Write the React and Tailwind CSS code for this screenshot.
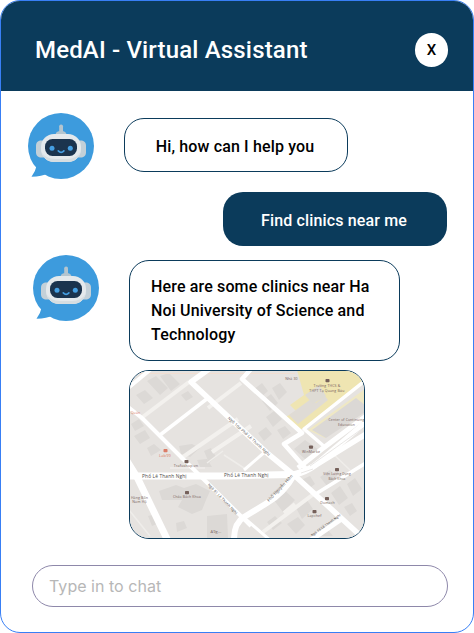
import React from "react";

function BotAvatar() {
  return (
    <svg className="h-[66px] w-[66px] shrink-0" viewBox="0 0 66 66">
      <path d="M5 46L8.500 53Q7.500 58.500 3.500 63.800Q14 63.500 20 60.500L30 60Z" fill="#3d9bdd" />
      <circle cx="33" cy="33" r="33" fill="#3d9bdd" />
      <rect x="31.2" y="11.500" width="3.800" height="11" rx="1.800" fill="#b4c5cf" />
      <path d="M27.500 22q0-4 5.500-4t5.500 4z" fill="#b4c5cf" />
      <path d="M16 27.500h-4q-4 1-4 5v7q0 4 4 5h4z" fill="#c3d0d8" />
      <path d="M50 27.500h4q4 1 4 5v7q0 4-4 5h-4z" fill="#c3d0d8" />
      <rect x="13" y="21" width="40" height="28" rx="13" fill="#e4e9ec" />
      <path d="M13.500 39q3 10 13.500 10h12q10.500 0 13.500-10q-4 7-13.500 7H27q-9.500 0-13.500-7" fill="#d5dde1" />
      <rect x="17" y="26" width="32" height="17" rx="7.500" fill="#1b344e" />
      <circle cx="24" cy="35.200" r="2.500" fill="#459fe2" />
      <circle cx="42.300" cy="35.200" r="2.500" fill="#459fe2" />
      <path d="M30.300 37.800q2.800 3 5.600 0" fill="none" stroke="#459fe2" strokeWidth="1.700" strokeLinecap="round" />
    </svg>
  );
}

function Poi({ x, y, lines, color = "#75605a", marker, size = 4 }) {
  return (
    <g fill={color}>
      {marker && <rect x={marker[0] - 2} y={marker[1] - 1.5} width="4" height="3.200" rx="0.800" />}
      {lines.map((line, i) => (
        <text key={line} x={x} y={y + i * 4.5} fontSize={size} textAnchor="middle">
          {line}
        </text>
      ))}
    </g>
  );
}

function ClinicMap() {
  return (
    <svg className="block h-full w-full font-['Open_Sans','Noto_Sans',sans-serif]" viewBox="130 371 234 167">
      <rect x="129" y="370" width="236" height="169" fill="#e6e3e0" />

      {/* School grounds */}
      <path d="M297 370H365V383L306 427L298 431L284 418L296 411L290 405L304 395Z" fill="#efe5b2" />
      <path d="M289 415L311 399L316 403L325 396L328 400L298 424Z" fill="#dfdbd5" />
      <path d="M305 395L319 385L326 396L313 404Z" fill="#dedbd4" />
      <path d="M308 430L365 389V408L325 438Z" fill="#efe8c4" />
      <path d="M312 430L356 398L365 405V412L326 438Z" fill="#dbd8d5" />

      {/* Building footprints */}
      <g fill="#dcd9d6">
        <path d="M147 381L156 376L168 388L160 395ZM160 376L169 373L180 384L171 391Z" />
        <path d="M181 395L188 391L193 397L186 401ZM136 395L145 390L153 398L144 404Z" />
        <path d="M131 424L139 419L144 426L135 431ZM134 436L145 430L150 438L140 444ZM147 448L154 444L161 450L151 456Z" />
        <path d="M253 390L262 383L268 391L260 398ZM262 401L271 394L278 403L270 411ZM272 388L280 383L287 392L279 400Z" />
        <path d="M266 417L274 411L282 419L273 427ZM258 433L266 427L272 434L264 441ZM277 430L285 426L291 433L283 439Z" />
        <path d="M179 446L192 444L200 448L190 457L181 454ZM204 451L211 448L216 457L209 463ZM197 460L207 459L212 467H200Z" />
        <path d="M159 491L176 485L184 488L196 484L210 491L206 500L202 510L192 514L178 507L182 500L162 500Z" />
        <path d="M207 516L227 514L228 538H207ZM176 523L184 521L187 528L177 532ZM148 516L157 514L161 522L152 526Z" />
        <path d="M270 495L280 486L295 500L283 512ZM301 480L310 476L315 484L307 490ZM320 477L330 470L338 478L327 486Z" />
        <path d="M331 493L340 486L348 498L339 505ZM347 484L355 478L362 489L353 496ZM344 507L352 503L357 511L350 516Z" />
        <path d="M296 508L307 500L313 509L302 519ZM287 524L298 517L305 525L296 534ZM267 522L275 516L282 523L273 530Z" />
        <path d="M294 449L305 440L319 450L306 460ZM317 530L323 524L333 536H320Z" />
      </g>

      {/* Minor lanes */}
      <g fill="none" stroke="#f3f1ee" strokeWidth="4">
        <path d="M189 382L140 419" />
        <path d="M241 383L208 408M238 419L180 459M251 426L212 452" />
        <path d="M315 493L263 532M295 504L284 513" />
        <path d="M130 373.500H295" strokeWidth="1" stroke="#f1ded2" />
      </g>
      <g fill="none" stroke="#efedea" strokeWidth="1.500">
        <path d="M170 468H205M207 463L223 451M224 455L244 468M129 510L150 536M330 451L350 470" />
      </g>

      {/* Streets */}
      <g fill="none" stroke="#ffffff" strokeLinejoin="round">
        <path d="M127 389L151 369" strokeWidth="4" />
        <path d="M209 369L191 382L266 452L294 475L364 539" strokeWidth="5.500" />
        <path d="M208 398L160 435" strokeWidth="3.500" />
        <path d="M128 407L142 418L178 454L251 526" strokeWidth="4" />
        <path d="M125 458L137 477L168 541" strokeWidth="7" />
        <path d="M128 476H225L290 474.500" strokeWidth="7" />
        <path d="M252 368L242 379L302 433L284 444L307 470" strokeWidth="4.500" />
        <path d="M366 380L304 429L326 448" strokeWidth="3.500" />
        <path d="M286 475Q307 473 320 461L366 422" strokeWidth="5.500" />
        <path d="M294 475Q305 473 316 465L366 434" strokeWidth="5.500" />
        <path d="M298 468L322 449L366 416" strokeWidth="5" />
        <path d="M244 470L266 451" strokeWidth="3" />
        <path d="M294 475Q284 493 267 503L244 517Q234 523 234 540" strokeWidth="6" />
        <path d="M242 516L271 541" strokeWidth="3" />
        <path d="M369 461L314 495" strokeWidth="3.500" />
        <path d="M343 518L308 542" strokeWidth="5" />
      </g>
      <path d="M310 466L366 426M301 473L313 469" fill="none" stroke="#dfddda" strokeWidth="0.700" />

      {/* Street names */}
      <g fill="#4c4947" fontSize="4.800">
        <text x="142" y="477.600">Phố Lê Thanh Nghị</text>
        <text x="224" y="476.800">Phố Lê Thanh Nghị</text>
        <g fontSize="4">
          <text transform="translate(227.500 418.500) rotate(42.500)">Ngõ 10p Phố Lê Thanh Nghị</text>
          <text transform="translate(207.500 485) rotate(46)" fontSize="3.700">Ngõ 81 Lê Thanh Nghị</text>
          <text transform="translate(269 502) rotate(-47)" fontSize="4.100">Phố Nguyễn Hiền</text>
          <text transform="translate(312 536.500) rotate(-36)" fontSize="3.200">Ngõ 15 Lê Thanh Nghị</text>
        </g>
      </g>

      {/* Places */}
      <Poi x={291.5} y={380} lines={["Nhà 30"]} size={3.5} />
      <Poi x={327} y={387} lines={["Trường THCS &", "THPT Tạ Quang Bửu"]} marker={[327.5, 380.5]} size={3.5} />
      <Poi x={346.5} y={421} lines={["Center of Continuing", "Education"]} size={3.4} />
      <Poi x={311} y={453} lines={["WinMarke"]} marker={[311, 447]} size={3.6} />
      <Poi x={165} y={456.5} lines={["Lab99"]} marker={[165.5, 450.5]} color="#dc7c67" />
      <Poi x={186} y={467} lines={["Trafoshop.vn"]} marker={[186.5, 461.5]} size={3.7} />
      <Poi x={187} y={498} lines={["Cháo Bách Khoa"]} marker={[187, 492.5]} size={3.4} />
      <Poi x={139.5} y={498.5} lines={["Hàng Bốn", "Nam Hộ"]} size={3.5} />
      <Poi x={135.5} y={414} lines={["Quán"]} color="#dc7c67" size={3.5} />
      <Poi x={337} y={475} lines={["Viện Lượng Dụng", "Bách Khoa"]} marker={[337, 469.500]} size={3.2} />
      <Poi x={327.5} y={504} lines={["Domach"]} marker={[327, 498.5]} size={3.5} />
      <Poi x={314.5} y={517} lines={["Lapchef"]} marker={[314.5, 511.5]} size={3.5} />
      <Poi x={216} y={533} lines={["A9g..."]} />
    </svg>
  );
}

export default function App() {
  return (
    <main className="flex h-[633px] w-[474px] flex-col overflow-hidden rounded-[20px] border border-[#387ff5] bg-white font-[Roboto,sans-serif] font-medium">
      <header className="flex h-[90px] shrink-0 items-center justify-between bg-[#0b3b5b] pr-[25px] pl-[34px] pt-2">
        <h1 className="text-2xl tracking-[0.16px] text-white">MedAI - Virtual Assistant</h1>
        <button className="flex h-[34px] w-[33px] items-center justify-center rounded-full bg-white text-[15px] text-black">
          X
        </button>
      </header>

      <section className="flex flex-col px-[26px] pt-[22px] text-base tracking-[0.15px] text-black">
        <div className="flex h-[66px] items-start pl-px">
          <BotAvatar />
          <p className="mt-[5px] ml-[30px] flex h-[54px] w-[224px] items-center justify-center rounded-[20px] border border-[#0b3b5b] pt-1 pr-0.5">
            Hi, how can I help you
          </p>
        </div>
        <p className="mt-[13px] flex h-[54px] w-[224px] items-center justify-center self-end rounded-[20px] bg-[#0b3b5b] pt-1 pr-0.5 text-white">
          Find clinics near me
        </p>
        <div className="mt-[9px] flex items-start pl-1.5">
          <BotAvatar />
          <div className="mt-[5px] ml-[30px] flex flex-col gap-[9px]">
            <p className="h-[101px] w-[271px] rounded-[20px] border border-[#0b3b5b] py-[14px] pr-4 pl-[21px] leading-6">
              Here are some clinics near Ha Noi University of Science and Technology
            </p>
            <div className="h-[169px] w-[236px] overflow-hidden rounded-[20px] border border-[#0b3b5b]">
              <ClinicMap />
            </div>
          </div>
        </div>
      </section>

      <input
        className="mx-[31px] mt-[26px] h-[42px] w-[416px] shrink-0 rounded-full border border-[#8e88aa] px-4 font-[Inter,sans-serif] text-base font-normal tracking-[0.03px] placeholder:text-[#b7b7b7]"
        placeholder="Type in to chat"
        aria-label="Message"
      />
    </main>
  );
}
